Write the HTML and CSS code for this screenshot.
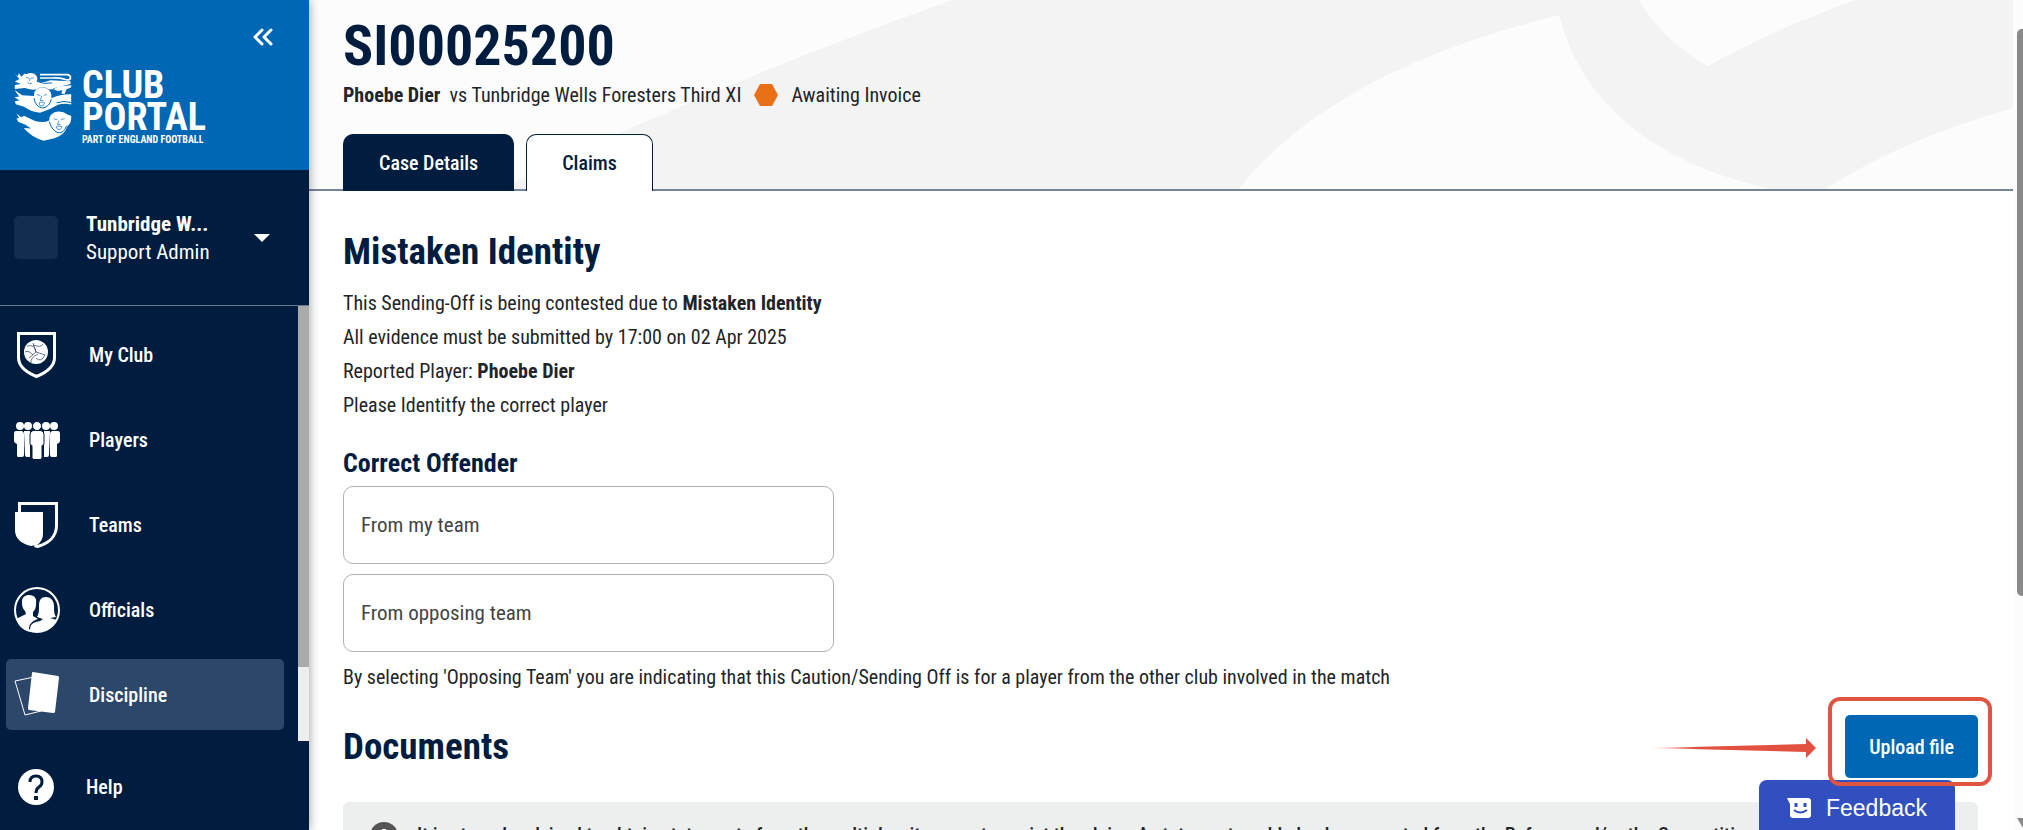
FILE: index.html
```html
<!DOCTYPE html>
<html lang="en">
<head>
    <meta charset="UTF-8">
    <meta name="viewport" content="width=device-width, initial-scale=1.0">
    <title>Club Portal - SI00025200</title>
    <link rel="stylesheet" href="styles.css">
</head>
<body>
    <aside class="sidebar">
        <div class="brand">
            <button class="collapse" aria-label="Collapse menu">
                <svg width="20" height="18" viewBox="0 0 20 18"><path d="M9 2L2 9l7 7M18 2l-7 7 7 7" fill="none" stroke="#fff" stroke-width="3" stroke-linecap="round" stroke-linejoin="round"/></svg>
            </button>
            <a class="logo" href="#">
                <!-- three lions crest -->
                <svg width="58" height="69" viewBox="28 36 174 208">
                    <g fill="#fff">
                        <path d="M30 41l9 8 3-9 8 10 9-9 8 1q8-6 22-1 12 8 8 22 14 8 40-2l61 3v8l-48 12q-14 8-22 2-14-10-32 2-12 4-36-4l-30 3v-12l18-3-18-7 14-8z"/>
                        <path d="M146 88l16-8 38-4v6l-14 6-6 14-10-1 4-10-14 2z"/>
                        <path d="M29 90l14 9 9 7 36 2q-1-18 13-22 12-8 28 1 14 10 11 28 28-13 60-12v31q-22-5-40 1-26 16-54 24-26-2-48-18l-25-8-3-9 14-2-15-10 14-2z"/>
                        <path d="M35 161l13 11 11-3 32 15q26 6 43-2-1-18 16-25 22-6 40 8l10 3q2 22-12 32-6 24-38 36l-33 7q-36-9-60-38l22 1-18-12-20-7-6-11 8-1z"/>
                    </g>
                    <path d="M106 44h82q10 2 10 9t-10 7q-22-8-46-6h-36" fill="none" stroke="#fff" stroke-width="5" stroke-linejoin="round"/>
                    <path d="M200 128q-22-7-44 1M96 64q22 10 46 5M140 118q-4 22-26 27-22-4-26-30M186 198q-8 24-26 21-18-6-26-33" fill="none" stroke="#0067b4" stroke-width="3"/>
                    <path d="M64 52l9 3M78 56l9-3M68 66q4 8 14 4M76 55l-2 8M97 104l10 3M117 107l10-4M111 108l-4 14h9M103 129q8-5 17 0l-5 9h-9zM147 177l11 3M169 180l11-4M163 182l-4 12h9M155 201q8-5 17 0l-5 8h-8z" fill="none" stroke="#0067b4" stroke-width="2"/>
                </svg>
                <span class="logo-text">
                    <strong>CLUB<br>PORTAL</strong>
                    <small>PART OF ENGLAND FOOTBALL</small>
                </span>
            </a>
        </div>

        <button class="profile">
            <span class="badge"></span>
            <span class="profile-text"><b>Tunbridge W...</b><br>Support Admin</span>
            <svg class="caret" width="16" height="8" viewBox="0 0 16 8"><path d="M0 0h16L8 8z" fill="#fff"/></svg>
        </button>

        <div class="nav-scroll">
            <nav class="nav">
                <a href="#">
                    <svg width="46" height="46" viewBox="0 0 46 46">
                        <path d="M4.500 1.500h36v24c0 9-8 15-18 19-10-4-18-10-18-19z" fill="none" stroke="#fff" stroke-width="3"/>
                        <circle cx="22" cy="20" r="12" fill="#fff"/>
                        <path d="M22 20l-3-9M22 20l9 3M22 20l-7 6M13 14q8-2 9 6M29 12q-2 4-10 1M31 23q-4 8-9 3M11 20q4-2 8 3M17 31q-1-5 7-9" fill="none" stroke="#001d40" stroke-opacity="0.6" stroke-width="1"/>
                    </svg>
                    My Club
                </a>
                <a href="#">
                    <svg width="46" height="46" viewBox="0 0 46 46">
                        <g fill="#fff">
                            <circle cx="6" cy="9" r="4"/><circle cx="14" cy="9" r="4"/><circle cx="32" cy="9" r="4"/><circle cx="40" cy="9" r="4"/>
                            <path d="M2 14h6q2 1 2 3v21q0 2-2 2H4q-1 0-1-2V27q-3-1-3-3v-7q0-3 2-3zM10 14h6v26h-3q-2 0-2-2zM44 14h-6q-2 1-2 3v21q0 2 2 2h4q1 0 1-2V27q3-1 3-3v-7q0-3-2-3zM36 14h-6v26h3q2 0 2-2z"/>
                            <g stroke="#001d40" stroke-width="1"><path d="M19 13.500h8q3 1 3 4v9q0 2-2 2v12q0 2-2 2h-6q-2 0-2-2v-12q-2 0-2-2v-9q0-3 3-4z"/><circle cx="23" cy="9" r="4.500"/></g>
                        </g>
                    </svg>
                    Players
                </a>
                <a href="#">
                    <svg width="46" height="46" viewBox="0 0 46 46">
                        <path d="M5.500 12V1.500h37v22c0 11-8 18-19 21l-3-1" fill="none" stroke="#fff" stroke-width="3"/>
                        <path d="M1 10h28v22q0 7-6 11l-6 1Q1 40 1 28z" fill="#fff"/>
                    </svg>
                    Teams
                </a>
                <a href="#">
                    <svg width="46" height="46" viewBox="0 0 46 46">
                        <circle cx="23" cy="23" r="22" fill="none" stroke="#fff" stroke-width="2"/>
                        <path d="M15 8c6 0 8 4 7 9 0 4-1 6-3 8v4l5 3c-6 2-9 5-9 10l1 3C8 43 4 38 2 32l10-5-1-3c-3-3-3-6-3-9 0-5 3-7 7-7z" fill="#fff"/>
                        <path d="M32 10c5 0 8 4 8 9 0 5 0 8 2 11l-6 1 7 2c-4 7-10 12-20 12-3 0-5-1-7-2 0-7 5-8 10-9l3-2-6-2c2-3 2-7 2-11 0-6 2-9 7-9z" fill="#fff"/>
                    </svg>
                    Officials
                </a>
                <a href="#" class="active">
                    <svg width="46" height="46" viewBox="0 0 46 46">
                        <path d="M20 5L1 9l10 34 16-4" fill="none" stroke="#fff" stroke-width="1"/>
                        <path d="M19 0q-1 0-1 1l-4 35q0 2 1 2l24 3q2 0 2-1l4-34q0-2-1-2z" fill="#fff"/>
                    </svg>
                    Discipline
                </a>
            </nav>
            <div class="track"><div class="thumb"></div></div>
        </div>

        <a class="help" href="#">
            <svg width="44" height="38" viewBox="0 0 44 38">
                <circle cx="22" cy="19" r="18" fill="#fff"/>
                <path d="M16 14q0-6 6-6t6 6q0 3-3 5t-3 6" fill="none" stroke="#001d40" stroke-width="3"/>
                <path d="M20 28h4v4h-4z" fill="#001d40"/>
            </svg>
            Help
        </a>
    </aside>

    <main>
        <header class="case-header">
            <svg class="pattern" viewBox="309 0 1704 190" preserveAspectRatio="xMaxYMin slice">
                <path d="M953 0Q730 78 498 190H2013V0z" fill="#f3f3f3"/>
                <path d="M1238 190Q1330 72 1559 15Q1594 150 1774 190z" fill="#fcfcfc"/>
                <path d="M1639 0Q1662 40 1708 66Q1772 30 1855 0z" fill="#fcfcfc"/>
                <path d="M1824 190Q1900 140 2013 108V190z" fill="#fcfcfc"/>
            </svg>
            <h1>SI00025200</h1>
            <p class="summary">
                <span><b>Phoebe Dier</b>&nbsp; vs Tunbridge Wells Foresters Third XI</span>
                <svg width="24" height="22" viewBox="0 0 24 22"><path d="M6 0h12l6 11-6 11H6L0 11z" fill="#ea7018"/></svg>
                <span>Awaiting Invoice</span>
            </p>
            <div class="tabs" role="tablist">
                <button class="tab" role="tab">Case Details</button>
                <button class="tab selected" role="tab" aria-selected="true">Claims</button>
            </div>
        </header>

        <section class="content">
            <h2>Mistaken Identity</h2>
            <p>This Sending-Off is being contested due to <b>Mistaken Identity</b></p>
            <p>All evidence must be submitted by 17:00 on 02 Apr 2025</p>
            <p>Reported Player: <b>Phoebe Dier</b></p>
            <p>Please Identitfy the correct player</p>

            <h3>Correct Offender</h3>
            <div class="offender">
                <input type="text" placeholder="From my team" aria-label="From my team">
                <input type="text" placeholder="From opposing team" aria-label="From opposing team">
            </div>
            <p>By selecting 'Opposing Team' you are indicating that this Caution/Sending Off is for a player from the other club involved in the match</p>

            <div class="documents">
                <h2>Documents</h2>
                <div class="upload">
                    <button>Upload file</button>
                    <div class="highlight"></div>
                    <svg class="arrow" width="166" height="20" viewBox="0 0 166 20">
                        <defs><linearGradient id="fade"><stop offset="0" stop-color="#e2503f" stop-opacity="0.2"/><stop offset="0.3" stop-color="#e2503f"/></linearGradient></defs>
                        <path d="M0 10l156-4v8z" fill="url(#fade)"/>
                        <path d="M156 0l10 10-10 10z" fill="#e2503f"/>
                    </svg>
                </div>
            </div>

            <div class="notice">
                <svg width="28" height="28" viewBox="0 0 28 28"><circle cx="14" cy="14" r="14" fill="#555"/><path d="M12 7h4v8h-4zM12 18h4v4h-4z" fill="#fff"/></svg>
                <p>It is strongly advised to obtain statements from the multiple witnesses to assist the claim. A statement could also be requested from the Referee and/or the Competition</p>
            </div>
        </section>
    </main>

    <div class="page-scroll">
        <div class="page-thumb"></div>
        <svg width="6" height="10" viewBox="0 0 6 10"><path d="M0 0h12L6 10z" fill="#8a8a8a"/></svg>
    </div>

    <button class="feedback">
        <svg width="24" height="20" viewBox="0 0 24 20">
            <path d="M0 0h21q3 0 3 3v14q0 3-3 3H6q-3 0-3-3V6z" fill="#fff"/>
            <path d="M9 5v4M18 5v4" stroke="#314fbe" stroke-width="3"/>
            <path d="M7 12q6 5 13 0" fill="none" stroke="#314fbe" stroke-width="2"/>
        </svg>
        Feedback
    </button>
</body>
</html>
```
FILE: styles.css
```css
* {
    box-sizing: border-box;
}

body {
    display: flex;
    height: 100vh;
    margin: 0;
    overflow: hidden;
    font-family: "Roboto Condensed", Roboto, sans-serif;
    font-size: 20px;
    color: #212529;
    background-color: #fff;
}

button {
    font-family: inherit;
    font-size: inherit;
    border: none;
    cursor: pointer;
}

h1, h2, h3, p {
    margin: 0;
}

svg {
    flex-shrink: 0;
}

/* Sidebar */

.sidebar {
    display: flex;
    flex-direction: column;
    flex-shrink: 0;
    width: 309px;
    background-color: #001d40;
    color: #fff;
    box-shadow: 0 0 10px rgba(0, 0, 0, 0.4);
    z-index: 1;
}

.sidebar a {
    color: #fff;
    text-decoration: none;
}

.brand {
    display: flex;
    flex-direction: column;
    flex-shrink: 0;
    height: 170px;
    padding: 28px 36px 0 14px;
    background-color: #0067b4;
}

.collapse {
    align-self: flex-end;
    height: 18px;
    padding: 0;
    background: none;
}

.collapse svg {
    display: block;
}

.logo {
    display: flex;
    gap: 10px;
    margin-top: 26px;
}

.logo-text strong {
    display: block;
    margin-top: -3px;
    font-size: 38px;
    line-height: 32px;
}

.logo-text small {
    display: block;
    margin-top: 1px;
    font-size: 10px;
    font-weight: bold;
    line-height: 12px;
    white-space: nowrap;
}

.profile {
    display: flex;
    align-items: center;
    flex-shrink: 0;
    gap: 28px;
    height: 136px;
    padding: 0 39px 0 14px;
    background: none;
    border-bottom: 1px solid #66778c;
    color: #fff;
    font-size: 21px;
    text-align: left;
    line-height: 28px;
}

.badge {
    width: 44px;
    height: 43px;
    border-radius: 5px;
    background-color: #122d50;
}

.caret {
    margin-left: auto;
}

.nav-scroll {
    display: flex;
    flex-shrink: 0;
}

.nav {
    display: flex;
    flex: 1;
    flex-direction: column;
    gap: 14px;
    padding: 13px 14px 11px 6px;
}

.nav a {
    display: flex;
    align-items: center;
    gap: 29px;
    height: 71px;
    padding-left: 8px;
    border-radius: 5px;
    font-weight: 500;
}

.nav .active {
    background-color: #2d476a;
}

.track {
    width: 11px;
    background-color: #eceeee;
}

.thumb {
    height: 83%;
    background-color: #ababab;
}

.help {
    display: flex;
    align-items: center;
    gap: 28px;
    padding: 27px 14px 20px;
    font-weight: 500;
}

/* Case header */

main {
    flex: 1;
    min-width: 0;
}

.case-header {
    position: relative;
    padding: 12px 34px 0;
    background-color: #fcfcfc;
    border-bottom: 2px solid #76849a;
}

.pattern {
    position: absolute;
    top: 0;
    left: 0;
    width: 100%;
    height: 100%;
}

h1, h2, h3 {
    color: #001d40;
}

h1 {
    position: relative;
    font-size: 56px;
    line-height: 68px;
}

.summary {
    position: relative;
    display: flex;
    align-items: center;
    gap: 13px;
    height: 30px;
}

.tabs {
    position: relative;
    display: flex;
    gap: 12px;
    margin: 24px 0 -2px;
}

.tab {
    height: 57px;
    padding: 0 35px;
    border: 1px solid #001d40;
    border-bottom: none;
    border-radius: 10px 10px 0 0;
    background-color: #001d40;
    color: #fff;
    font-weight: 500;
}

.tab.selected {
    background-color: #fff;
    color: #001d40;
}

/* Claims */

.content {
    padding: 36px 35px 0 34px;
}

h2 {
    font-size: 37px;
    line-height: 50px;
}

.content p {
    line-height: 34px;
}

h2 + p {
    margin-top: 9px;
}

h3 {
    margin-top: 24px;
    font-size: 26px;
    line-height: 34px;
}

.offender {
    display: flex;
    flex-direction: column;
    gap: 10px;
    width: 30%;
    margin: 6px 0 8px;
}

.offender input {
    height: 78px;
    padding: 0 17px;
    border: 1px solid #b0b0b0;
    border-radius: 10px;
    font-family: inherit;
    font-size: 21px;
}

.offender input::placeholder {
    color: #444;
    opacity: 1;
}

.documents {
    display: flex;
    align-items: center;
    justify-content: space-between;
    margin: 21px 0 24px;
}

.upload {
    position: relative;
}

.upload button {
    height: 63px;
    padding: 0 24px;
    border-radius: 5px;
    background-color: #0067b4;
    color: #fff;
    font-weight: 500;
}

.highlight {
    position: absolute;
    top: -18px;
    right: -14px;
    bottom: -8px;
    left: -17px;
    border: 4px solid #e05442;
    border-radius: 12px;
    z-index: 3;
    pointer-events: none;
}

.arrow {
    position: absolute;
    top: 23px;
    right: calc(100% + 29px);
}

.notice {
    display: flex;
    align-items: flex-start;
    gap: 19px;
    padding: 20px 27px;
    border-radius: 6px;
    background-color: #edeeee;
    font-weight: 500;
}

.notice p {
    margin-top: -4px;
}

/* Page scrollbar and feedback */

.page-scroll {
    display: flex;
    flex-direction: column;
    justify-content: space-between;
    width: 10px;
    padding: 29px 0 2px 4px;
    background-color: #fcfcfc;
}

.page-thumb {
    height: 71%;
    border-radius: 5px 0 0 5px;
    background-color: #8a8a8a;
}

.feedback {
    position: fixed;
    right: 68px;
    bottom: 0;
    display: flex;
    align-items: center;
    gap: 15px;
    height: 50px;
    padding: 6px 28px 0;
    border-radius: 8px 8px 0 0;
    background-color: #314fbe;
    color: #fff;
    font-family: "Liberation Sans", Arial, sans-serif;
    font-size: 23px;
    z-index: 2;
}
```
